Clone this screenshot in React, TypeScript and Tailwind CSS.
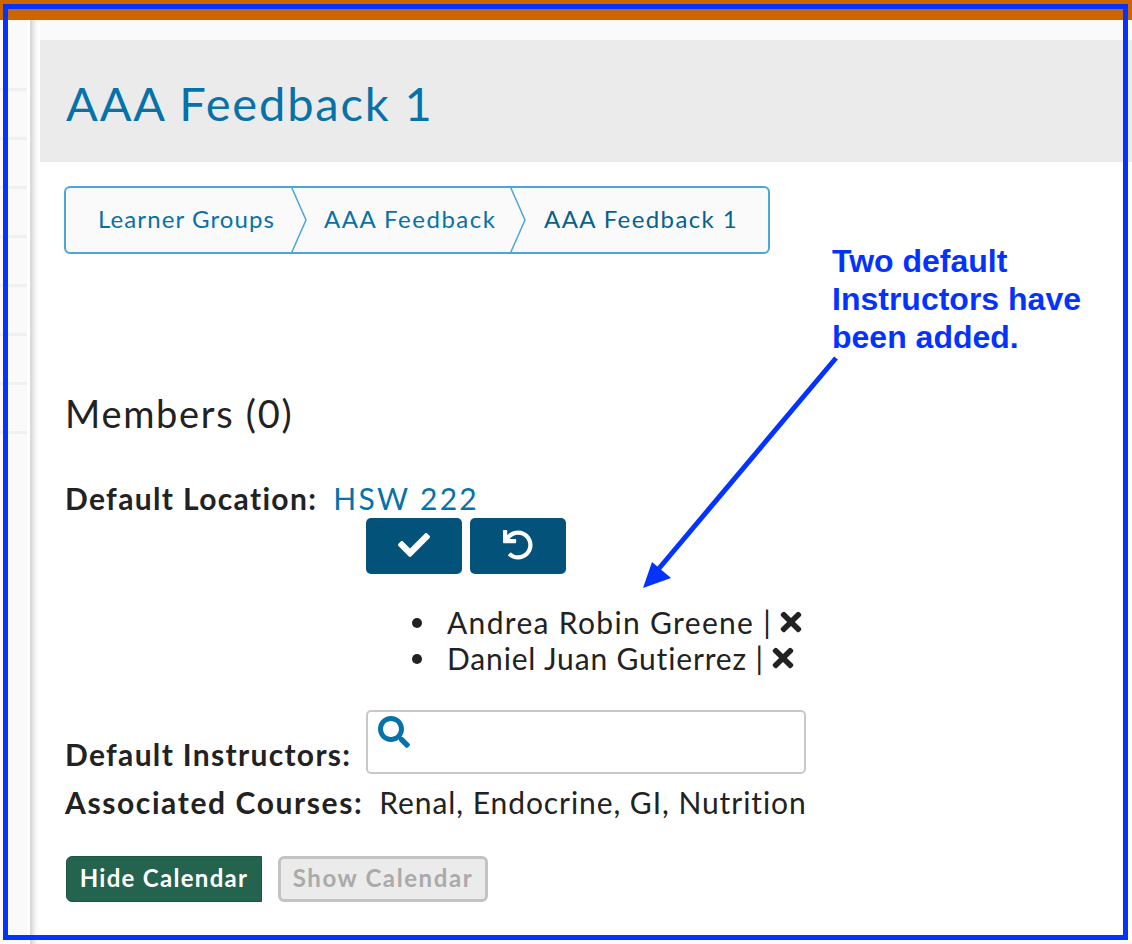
import React from 'react'
import { FaCheck, FaUndo, FaTimes, FaSearch } from 'react-icons/fa'

const instructors = [
  { name: 'Andrea Robin Greene', spacing: 'tracking-[1.33px]' },
  { name: 'Daniel Juan Gutierrez', spacing: 'tracking-[0.85px]' },
]
const railRows = [0, 1, 2, 3, 4, 5, 6, 7]

function Chevron() {
  return (
    <svg className="absolute right-0 top-[-2px] h-[68px] w-[17px]" viewBox="0 0 17 68" fill="none">
      <path d="M1 0 L16 34 L1 68" stroke="#4ba6d9" strokeWidth="1.5" fill="#fafafa" />
    </svg>
  )
}

export default function App() {
  return (
    <div className="relative flex h-[944px] w-[1132px] flex-col overflow-hidden bg-white font-['Lato',sans-serif] text-[#222222]">
      <div className="h-5 shrink-0 bg-[#cc6600]" />

      <div className="flex min-h-0 flex-1">
        {/* left rail behind the page */}
        <div className="w-[30px] shrink-0 pr-[3px]">
          <div className="h-full bg-[#fafafa] pt-[68px]">
            {railRows.map((r) => (
              <div key={r} className="mb-[46px] h-[3px] bg-[#f0f0f0]" />
            ))}
          </div>
        </div>

        <main className="min-w-0 flex-1 bg-white shadow-[inset_6px_0_6px_-3px_#cccccc]">
          <div className="ml-[10px] h-5 bg-[#fafafa]" />
          <div className="ml-[10px] flex h-[122px] items-center bg-[#ebebeb] pl-[26px] pt-[5px]">
            <h1 className="text-[47px] leading-none tracking-[1.85px] text-[#0672a9]">AAA Feedback 1</h1>
          </div>

          <div className="pl-[35px]">
            <nav className="-ml-px mt-6 flex h-[68px] w-[706px] items-center rounded-md border-2 border-[#4ba6d9] bg-[#fafafa] pb-[3px] text-[24px]">
              <a className="relative flex h-full w-[241px] items-center pl-[32px] tracking-[1.1px] text-[#0672a9]">
                Learner Groups
                <Chevron />
              </a>
              <a className="relative flex h-full w-[219px] items-center pl-[17px] tracking-[1.5px] text-[#0672a9]">
                AAA Feedback
                <Chevron />
              </a>
              <span className="flex h-full items-center pl-[18px] tracking-[1.4px] text-[#03628e]">AAA Feedback 1</span>
            </nav>

            <h2 className="mt-[137px] text-[38px] leading-[44px] tracking-[1.7px]">Members (0)</h2>

            <div className="mt-[45px] flex items-baseline text-[30px] leading-[36px]">
              <span className="font-bold tracking-[1.35px]">Default Location:</span>
              <a className="ml-[16px] tracking-[2.3px] text-[#0672a9]">HSW 222</a>
            </div>

            <div className="ml-[301px] mt-[2px] flex gap-2">
              <button className="flex h-[56px] w-[96px] items-center justify-center rounded-[5px] bg-[#03527a] pb-[2px] text-white">
                <FaCheck size={32} />
              </button>
              <button className="flex h-[56px] w-[96px] items-center justify-center rounded-[5px] bg-[#03527a] pb-[3px] text-white">
                <FaUndo size={30} />
              </button>
            </div>

            <ul className="ml-[301px] mt-[30px] list-none text-[30px] leading-[36px]">
              {instructors.map((item) => (
                <li key={item.name} className="relative flex items-center pl-[81px]">
                  <span className="absolute left-[46px] top-[14px] h-[10px] w-[10px] rounded-full bg-[#222222]" />
                  <span className={item.spacing}>{item.name} |</span>
                  <FaTimes size={30} className="ml-[4px]" />
                </li>
              ))}
            </ul>

            <div className="mt-[34px] flex items-end">
              <span className="mb-[2px] w-[301px] text-[30px] font-bold leading-[36px] tracking-[1.32px]">
                Default Instructors:
              </span>
              <div className="h-[64px] w-[440px] rounded-[5px] border-2 border-[#c8c8c8] pl-[10px] pt-[4px]">
                <FaSearch size={32} className="text-[#0672a9]" />
              </div>
            </div>

            <div className="mt-[10px] flex items-baseline text-[30px] leading-[36px]">
              <span className="font-bold tracking-[1.6px]">Associated Courses:</span>
              <span className="ml-[16px] tracking-[0.93px]">Renal, Endocrine, GI, Nutrition</span>
            </div>

            <div className="ml-px mt-[36px] flex gap-4 text-[24px] font-bold">
              <button className="h-[46px] w-[196px] rounded-l-md border border-[#1d5642] bg-[#24634e] pb-[3px] tracking-[1.3px] text-white">
                Hide Calendar
              </button>
              <button className="h-[46px] w-[210px] rounded-md border-[3px] border-[#c3c3c3] bg-[#ebebeb] pb-[3px] tracking-[1.6px] text-[#aaaaaa]">
                Show Calendar
              </button>
            </div>
          </div>
        </main>
      </div>

      {/* annotation drawn over the screenshot */}
      <div className="pointer-events-none absolute left-[3px] top-1 h-[936px] w-[1125px] border-[5px] border-[#0433ff]" />
      <p className="absolute left-[832px] top-[242px] font-['Liberation_Sans',sans-serif] text-[32px] font-bold leading-[38px] text-[#0433ff]">
        Two default
        <br />
        Instructors have
        <br />
        been added.
      </p>
      <svg className="pointer-events-none absolute left-[630px] top-[350px] h-[250px] w-[220px]" viewBox="0 0 220 250" fill="none">
        <path d="M206 8 L26 222" stroke="#0433ff" strokeWidth="5" />
        <path d="M13 238 L22 212 L41 228 Z" fill="#0433ff" />
      </svg>
    </div>
  )
}
